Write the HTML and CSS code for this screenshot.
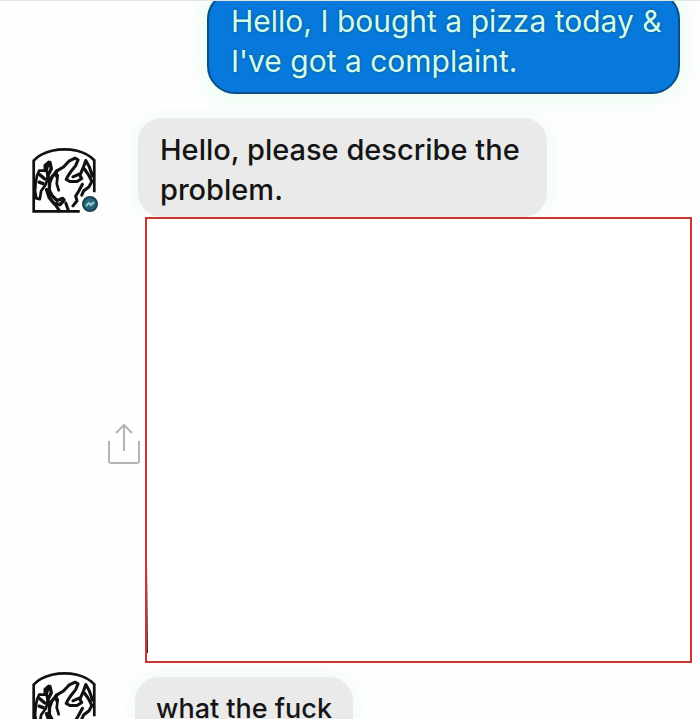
FILE: index.html
```html
<!DOCTYPE html>
<html lang="en">

<head>
   <meta charset="UTF-8">
   <meta name="viewport" content="width=device-width, initial-scale=1.0">
   <link rel="stylesheet" href="styles.css">
   <title>Chat</title>
</head>

<body>
   <!-- mascot drawing shared by both avatars -->
   <svg class="defs" aria-hidden="true">
      <symbol id="mascot" viewBox="39 36 195 195">
         <path d="M44 226V76Q62 56 98 47Q135 39 172 47Q204 55 223 75V170M40 226H180" fill="none" stroke="#111" stroke-width="8"/>
         <g fill="none" stroke="#111" stroke-linejoin="round" stroke-linecap="round">
            <!-- raised arm and sleeve -->
            <path d="M88 80L77 90V106L60 106L54 120L50 140L48 166L52 188L62 190L66 166L80 146L86 122L82 106Z" stroke-width="8"/>
            <path d="M62 118L76 130M60 140L72 144M92 82L96 100L86 120L90 140" stroke-width="10"/>
            <!-- head and wreath -->
            <path d="M112 124L110 108L132 95L148 78L166 69L175 74L168 91L153 110L145 122L140 132L152 138L172 138L186 129L178 116L160 124" stroke-width="9"/>
            <path d="M112 108L98 124L91 142L90 164L99 181L113 194L130 188L134 193L122 206L104 203L90 186L82 162" stroke-width="10"/>
            <path d="M115 120L112 144L118 164" stroke-width="8"/>
            <!-- spear arm -->
            <path d="M182 116L190 98L198 76L208 94L218 122M194 101L206 118L216 138L207 154L192 165L186 178" stroke-width="9"/>
            <path d="M188 146L176 168L168 181L172 195L160 210M106 204L120 224M139 202L146 222" stroke-width="9"/>
         </g>
      </symbol>
   </svg>

   <main>
      <div class="row sent">
         <p class="bubble blue">Hello, I bought a pizza today &amp; I've got a complaint.</p>
      </div>

      <div class="row received">
         <div class="avatar">
            <svg class="face" role="img" aria-label="Pizza shop"><use href="#mascot"/></svg>
            <svg class="badge" viewBox="0 0 16 16" aria-hidden="true">
               <circle cx="8" cy="8" r="7" fill="#216779" stroke="#174250" stroke-width="2"/>
               <path d="M4 10l3-3 2 2 3-3" fill="none" stroke="#9fcbd0" stroke-width="2"/>
            </svg>
         </div>
         <p class="bubble grey">Hello, please describe the problem.</p>
      </div>

      <div class="row attachment">
         <button class="share" aria-label="Share">
            <svg viewBox="0 0 34 42">
               <path d="M2 18V38Q2 40 4 40H30Q32 40 32 38V18M17 28V2M9 10l8-8 8 8" fill="none" stroke="#b4b4b4" stroke-width="2"/>
            </svg>
         </button>
         <div class="photo"></div>
      </div>

      <div class="row received">
         <div class="avatar">
            <svg class="face" role="img" aria-label="Pizza shop"><use href="#mascot"/></svg>
         </div>
         <p class="bubble grey small">what the fuck</p>
      </div>
   </main>
</body>

</html>
```

FILE: styles.css
```css
* {
   padding: 0;
   margin: 0;
   box-sizing: border-box;
}

body {
   font-family: Inter, "Liberation Sans", sans-serif;
   font-size: 29px;
   line-height: 40px;
   color: #151515;
   background-color: #fdfefd;
}

.defs {
   position: absolute;
   width: 0;
   height: 0;
}

main {
   display: flex;
   flex-direction: column;
   height: 100vh;
   overflow: hidden;
   border-top: 1px solid #dfe5e1;
}

.row {
   display: flex;
   flex-shrink: 0;
}

/* the thread is scrolled, so the first bubble starts above the window */
.sent {
   justify-content: flex-end;
   margin-top: -10px;
   padding-right: 20px;
}

.bubble {
   border-radius: 24px;
}

.blue {
   max-width: 473px;
   padding: 8px 12px 11px 22px;
   font-size: 30px;
   color: #d2fbed;
   background-color: #0879dc;
   border: 2px solid #0a4e85;
   border-radius: 28px;
   box-shadow: 0 0 14px 8px #edfdf3;
   text-shadow: 0 0 3px #07566f;
}

.received {
   padding-left: 32px;
}

.sent + .received {
   margin-top: 24px;
}

.avatar {
   position: relative;
   flex-shrink: 0;
   width: 66px;
   height: 66px;
   margin: 29px 40px 0 0;
}

.face {
   display: block;
   width: 100%;
   height: 100%;
}

.badge {
   position: absolute;
   right: 0;
   bottom: 1px;
   width: 16px;
   height: 16px;
}

.grey {
   max-width: 409px;
   padding: 12px 22px 7px;
   font-weight: 500;
   background-color: #e9eae9;
   box-shadow: 0 0 12px 4px #f2fcf4;
}

.attachment {
   align-items: center;
   padding: 0 8px 0 107px;
}

.share {
   flex-shrink: 0;
   width: 34px;
   height: 42px;
   margin: 8px 4px 0 0;
   background: none;
   border: none;
   cursor: pointer;
}

.share svg {
   display: block;
   width: 100%;
   height: 100%;
}

.photo {
   position: relative;
   flex: 1;
   height: 446px;
   background-color: #fff;
   border: 2px solid #cf3434;
}

/* dark sliver at the lower left edge of the photo */
.photo::before {
   content: "";
   position: absolute;
   left: 0;
   bottom: 8px;
   width: 1px;
   height: 92px;
   background: linear-gradient(transparent, #222);
}

.attachment + .received .avatar {
   margin: 8px 37px 0 0;
}

.small {
   margin-top: 14px;
   padding: 12px 21px;
   font-size: 27px;
}
```
